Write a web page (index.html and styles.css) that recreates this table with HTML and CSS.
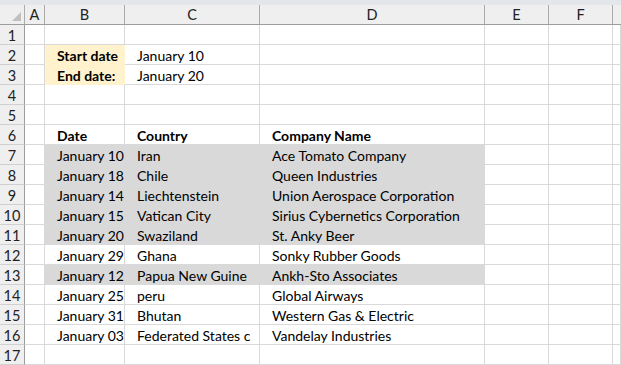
FILE: index.html
```html
<!DOCTYPE html>
<html>
<head>
<meta charset="utf-8">
<link rel="stylesheet" href="styles.css">
</head>
<body>
<div class="strip"></div>
<div class="sheet">
  <div class="ch corner"><span class="tri"></span></div>
  <div class="ch">A</div><div class="ch">B</div><div class="ch">C</div><div class="ch">D</div><div class="ch">E</div><div class="ch">F</div><div class="ch last"></div>

  <div class="rh">1</div><div class="c"></div><div class="c"></div><div class="c"></div><div class="c"></div><div class="c"></div><div class="c"></div><div class="c"></div>

  <div class="rh">2</div><div class="c"></div><div class="c y b in">Start date</div><div class="c in">January 10</div><div class="c"></div><div class="c"></div><div class="c"></div><div class="c"></div>

  <div class="rh">3</div><div class="c"></div><div class="c y b in">End date:</div><div class="c in">January 20</div><div class="c"></div><div class="c"></div><div class="c"></div><div class="c"></div>

  <div class="rh">4</div><div class="c"></div><div class="c"></div><div class="c"></div><div class="c"></div><div class="c"></div><div class="c"></div><div class="c"></div>

  <div class="rh">5</div><div class="c"></div><div class="c"></div><div class="c"></div><div class="c"></div><div class="c"></div><div class="c"></div><div class="c"></div>

  <div class="rh">6</div><div class="c"></div><div class="c b in">Date</div><div class="c b in">Country</div><div class="c b in">Company Name</div><div class="c"></div><div class="c"></div><div class="c"></div>

  <div class="rh">7</div><div class="c"></div><div class="c g in">January 10</div><div class="c g in">Iran</div><div class="c g in">Ace Tomato Company</div><div class="c"></div><div class="c"></div><div class="c"></div>

  <div class="rh">8</div><div class="c"></div><div class="c g in">January 18</div><div class="c g in">Chile</div><div class="c g in">Queen Industries</div><div class="c"></div><div class="c"></div><div class="c"></div>

  <div class="rh">9</div><div class="c"></div><div class="c g in">January 14</div><div class="c g in">Liechtenstein</div><div class="c g in">Union Aerospace Corporation</div><div class="c"></div><div class="c"></div><div class="c"></div>

  <div class="rh">10</div><div class="c"></div><div class="c g in">January 15</div><div class="c g in">Vatican City</div><div class="c g in">Sirius Cybernetics Corporation</div><div class="c"></div><div class="c"></div><div class="c"></div>

  <div class="rh">11</div><div class="c"></div><div class="c g in">January 20</div><div class="c g in">Swaziland</div><div class="c g in">St. Anky Beer</div><div class="c"></div><div class="c"></div><div class="c"></div>

  <div class="rh">12</div><div class="c"></div><div class="c in">January 29</div><div class="c in">Ghana</div><div class="c in">Sonky Rubber Goods</div><div class="c"></div><div class="c"></div><div class="c"></div>

  <div class="rh">13</div><div class="c"></div><div class="c g in">January 12</div><div class="c g in">Papua New Guine</div><div class="c g in">Ankh-Sto Associates</div><div class="c"></div><div class="c"></div><div class="c"></div>

  <div class="rh">14</div><div class="c"></div><div class="c in">January 25</div><div class="c in">peru</div><div class="c in">Global Airways</div><div class="c"></div><div class="c"></div><div class="c"></div>

  <div class="rh">15</div><div class="c"></div><div class="c in">January 31</div><div class="c in">Bhutan</div><div class="c in">Western Gas &amp; Electric</div><div class="c"></div><div class="c"></div><div class="c"></div>

  <div class="rh">16</div><div class="c"></div><div class="c in">January 03</div><div class="c in">Federated States c</div><div class="c in">Vandelay Industries</div><div class="c"></div><div class="c"></div><div class="c"></div>

  <div class="rh">17</div><div class="c"></div><div class="c"></div><div class="c"></div><div class="c"></div><div class="c"></div><div class="c"></div><div class="c"></div>
</div>
</body>
</html>
```
FILE: styles.css
```css
html, body {
  margin: 0;
  padding: 0;
  background: #ffffff;
  overflow: hidden;
}
body {
  font-family: "Lato", "Open Sans", sans-serif;
  font-size: 14px;
  color: #000;
}
.strip {
  height: 5px;
  background: #e3e6ea;
}
.sheet {
  display: grid;
  grid-template-columns: 25px 20px 80px 135px 225px 64px 64px 1fr;
  grid-auto-rows: 20px;
}
.sheet > div {
  box-sizing: border-box;
  white-space: nowrap;
  overflow: hidden;
  line-height: 19px;
}
.ch {
  background: #efefef;
  border-right: 1px solid #acacac;
  border-bottom: 1px solid #9c9c9c;
  text-align: center;
  color: #222;
  font-size: 14.5px;
  line-height: 20px !important;
}
.ch.last {
  border-right: none;
}
.corner {
  position: relative;
  border-right: 1px solid #acacac;
}
.tri {
  position: absolute;
  right: 3px;
  bottom: 3px;
  width: 0;
  height: 0;
  border-left: 9px solid transparent;
  border-bottom: 9px solid #bfbfbf;
}
.rh {
  background: #efefef;
  border-right: 1px solid #9c9c9c;
  border-bottom: 1px solid #d0d0d0;
  text-align: center;
  color: #222;
  font-size: 14.5px;
  padding-top: 1px;
}
.c {
  border-right: 1px solid #d9d9d9;
  border-bottom: 1px solid #d9d9d9;
  padding-top: 1px;
}
.in {
  padding-left: 12px;
}
.b {
  font-weight: bold;
}
.y {
  background: #fff2cc;
  border-color: #fff2cc;
}
.g {
  background: #d9d9d9;
  border-color: #d9d9d9;
}
```
